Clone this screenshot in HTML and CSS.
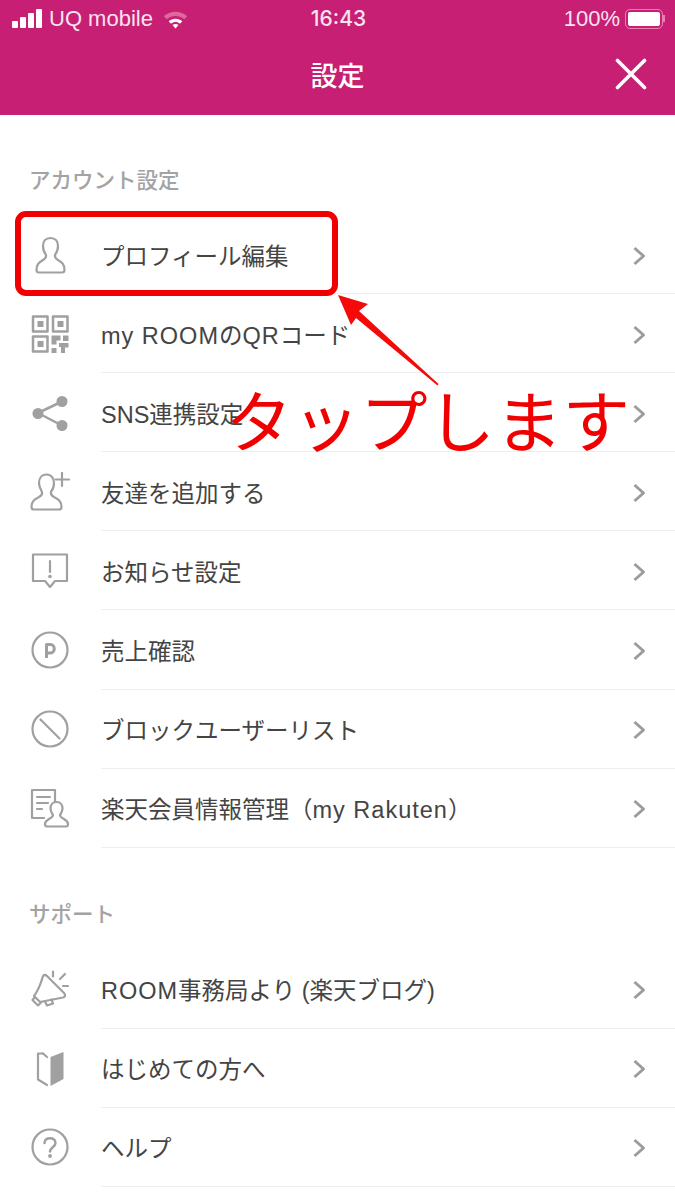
FILE: index.html
```html
<!DOCTYPE html>
<html lang="ja">
<head>
<meta charset="UTF-8" />
<meta name="viewport" content="width=device-width, initial-scale=1" />
<title>設定</title>
<link rel="stylesheet" href="styles.css">
</head>
<body>

  <header class="header">
    <div class="status">
      <div class="status-left">
        <span class="signal"><i></i><i></i><i></i><i></i></span>
        <span>UQ mobile</span>
        <svg class="wifi" viewBox="0 0 24 18" width="27" height="20">
          <path d="M1.500 6.500C7.500 1 16.500 1 22.500 6.500L19.800 9.300C15.300 5.300 8.700 5.300 4.200 9.300Z" fill="#e2669f"/>
          <path d="M5.800 11C9.300 7.900 14.700 7.900 18.200 11L16 13.200C13.700 11.300 10.300 11.300 8 13.200Z" fill="#fff"/>
          <path d="M9.300 14.500C10.900 13.300 13.100 13.300 14.700 14.500L12 17.500Z" fill="#fff"/>
        </svg>
      </div>
      <div class="status-time">16:43</div>
      <div class="status-right">
        <span>100%</span>
        <span class="battery"><span class="battery-fill"></span></span>
        <span class="battery-cap"></span>
      </div>
    </div>
    <div class="nav">
      <h1 class="nav-title">設定</h1>
      <button class="nav-close" aria-label="閉じる">
        <svg viewBox="0 0 32 32" width="32" height="32">
          <path d="M2.500 2.500L29.500 29.500M29.500 2.500L2.500 29.500" stroke="#fff" stroke-width="3.600" stroke-linecap="round" fill="none"/>
        </svg>
      </button>
    </div>
  </header>

  <main class="settings">
    <h2 class="section-title">アカウント設定</h2>
    <ul class="menu">
      <li class="menu-item">
        <svg class="icon" viewBox="0 0 40 40"><path d="M20.500 3C15.500 3 13 6.500 13 11C13 15 14.500 18 16 20C16.500 22.500 15.500 23.500 13 25C9.500 27 6.500 29 6.500 35C6.500 36.500 7.500 37.500 9 37.500H32C33.500 37.500 34.500 36.500 34.500 35C34.500 29 31.500 27 28 25C25.500 23.500 24.500 22.500 25 20C26.500 18 28 15 28 11C28 6.500 25.500 3 20.500 3Z"/></svg>
        <span class="menu-label">プロフィール編集</span>
        <svg class="chevron" viewBox="0 0 14 20"><path d="M2.500 2L11.500 10L2.500 18"/></svg>
      </li>
      <li class="menu-item">
        <svg class="icon" viewBox="0 0 40 40">
          <path d="M3 2.500h14.500v15H3zM23 2.500h14.500v15H23zM3 22.500h14.500v15H3z" stroke-width="2.500"/>
          <path class="solid" d="M7.500 7h6v6h-6zM27.500 7h6v6h-6zM7.500 27h6v6h-6zM21.500 21.500h9v5h-4v4h-5zM33 21.500h5.500v5.500H33zM29 29h9.500v4.500H35V39h-4v-6h-2zM21.500 34h5v5h-5z"/>
        </svg>
        <span class="menu-label"><span class="latin">my ROOM</span>の<span class="latin">QR</span>コード</span>
        <svg class="chevron" viewBox="0 0 14 20"><path d="M2.500 2L11.500 10L2.500 18"/></svg>
      </li>
      <li class="menu-item">
        <svg class="icon" viewBox="0 0 40 40">
          <path d="M32 8.500L8 20L32 32.500" stroke-width="2.500"/>
          <circle class="solid" cx="32" cy="8.500" r="5.500"/>
          <circle class="solid" cx="8" cy="20.500" r="5.500"/>
          <circle class="solid" cx="32" cy="32.500" r="5.500"/>
        </svg>
        <span class="menu-label">SNS連携設定</span>
        <svg class="chevron" viewBox="0 0 14 20"><path d="M2.500 2L11.500 10L2.500 18"/></svg>
      </li>
      <li class="menu-item">
        <svg class="icon" viewBox="0 0 40 40">
          <path d="M16.500 2.500C11.500 2.500 9 6.500 9 11C9 15 11 18 12 20C12.500 22 11.500 23.500 9 25C5 27 1.500 29 1.500 35C1.500 36.500 2.500 37.500 4 37.500H29C30.500 37.500 31.500 36.500 31.500 35C31.500 29 28 27 24 25C21.500 23.500 20.500 22 21 20C22.500 18 24 15 24 11C24 6.500 21.500 2.500 16.500 2.500Z"/>
          <path d="M32 1V14M25.500 7.500H39"/>
        </svg>
        <span class="menu-label">友達を追加する</span>
        <svg class="chevron" viewBox="0 0 14 20"><path d="M2.500 2L11.500 10L2.500 18"/></svg>
      </li>
      <li class="menu-item">
        <svg class="icon" viewBox="0 0 40 40">
          <path d="M3 3.500H37V30H25L20 36L15 30H3Z"/>
          <path d="M20 10V21"/>
          <circle class="solid" cx="20" cy="25.500" r="1.800"/>
        </svg>
        <span class="menu-label">お知らせ設定</span>
        <svg class="chevron" viewBox="0 0 14 20"><path d="M2.500 2L11.500 10L2.500 18"/></svg>
      </li>
      <li class="menu-item">
        <svg class="icon" viewBox="0 0 40 40">
          <circle cx="20" cy="20" r="17.500"/>
          <path d="M16.500 28V14.500H20.500C25.500 14.500 25.500 23 20.500 23H16.500" stroke-width="3" stroke-linecap="butt"/>
        </svg>
        <span class="menu-label">売上確認</span>
        <svg class="chevron" viewBox="0 0 14 20"><path d="M2.500 2L11.500 10L2.500 18"/></svg>
      </li>
      <li class="menu-item">
        <svg class="icon" viewBox="0 0 40 40">
          <circle cx="20" cy="20" r="17.500"/>
          <path d="M10.500 10.500L29.500 29.500"/>
        </svg>
        <span class="menu-label">ブロックユーザーリスト</span>
        <svg class="chevron" viewBox="0 0 14 20"><path d="M2.500 2L11.500 10L2.500 18"/></svg>
      </li>
      <li class="menu-item">
        <svg class="icon" viewBox="0 0 40 40">
          <path d="M14 30H2V2H25V13"/>
          <path d="M7 9H20M7 15H18M7 21H12"/>
          <path d="M26.500 14C22.500 14 20.500 17 20.500 20.500C20.500 23.500 22 25 23 27C23 29 21 30 19 31C16.500 32.500 15 34 15 36C15 37.500 16 38.500 17 38.500H36C37 38.500 38 37.500 38 36C38 34 36.500 32.500 34 31C32 30 30 29 30 27C31 25 32.500 23.500 32.500 20.500C32.500 17 30.500 14 26.500 14Z"/>
        </svg>
        <span class="menu-label">楽天会員情報管理（<span class="latin">my Rakuten</span>）</span>
        <svg class="chevron" viewBox="0 0 14 20"><path d="M2.500 2L11.500 10L2.500 18"/></svg>
      </li>
    </ul>

    <h2 class="section-title section-title-support">サポート</h2>
    <ul class="menu">
      <li class="menu-item">
        <svg class="icon" viewBox="0 0 40 40">
          <path d="M13 7C15 5 16 6 17 7L34 24C36 26 35 28 33 28.500L10 33L4 27C8 22 11 14 13 7Z"/>
          <path d="M5 28L2.500 31L8 36.500L11 33.500M15 32.500L17 36.500L23 34.500L21.500 30.500"/>
          <path d="M23 2.500V7.500M35 5L30 10M38 17H33"/>
        </svg>
        <span class="menu-label"><span class="latin">ROOM</span>事務局より (楽天ブログ)</span>
        <svg class="chevron" viewBox="0 0 14 20"><path d="M2.500 2L11.500 10L2.500 18"/></svg>
      </li>
      <li class="menu-item">
        <svg class="icon" viewBox="0 0 40 40">
          <path d="M13 5.500H8V31.500L17 37"/>
          <path d="M13 5.500L17 9"/>
          <path class="solid" d="M20.500 9L33.500 4V31L20.500 38Z"/>
        </svg>
        <span class="menu-label">はじめての方へ</span>
        <svg class="chevron" viewBox="0 0 14 20"><path d="M2.500 2L11.500 10L2.500 18"/></svg>
      </li>
      <li class="menu-item">
        <svg class="icon" viewBox="0 0 40 40">
          <circle cx="20" cy="20" r="17.500"/>
          <path d="M14.500 16C14.500 9.500 25.500 9.500 25.500 16C25.500 20 20 20.500 20 24.500" stroke-width="2.500"/>
          <circle class="solid" cx="20" cy="29" r="1.900"/>
        </svg>
        <span class="menu-label">ヘルプ</span>
        <svg class="chevron" viewBox="0 0 14 20"><path d="M2.500 2L11.500 10L2.500 18"/></svg>
      </li>
    </ul>
  </main>

  <!-- annotation drawn over the screenshot -->
  <div class="note-box"></div>
  <svg class="note-arrow" viewBox="0 0 110 100" width="110" height="100">
    <path d="M0 1L30 10L21 17L100.500 90L99.500 91.500L18 24L13 31Z" fill="#f50a0a"/>
  </svg>
  <div class="note-text">タップします</div>

</body>
</html>
```

FILE: styles.css
```css
* {
  box-sizing: border-box;
}

html, body {
  height: 1200px;
  overflow: hidden;
}

body {
  margin: 0;
  position: relative;
  background: #fff;
  font-family: 'Liberation Sans', 'Noto Sans CJK JP', sans-serif;
  color: #444;
}

ul {
  list-style: none;
  margin: 0;
  padding: 0;
}

/* Header */
.header {
  background: #c71f74;
  color: #fff;
  height: 115px;
}

.status {
  height: 37px;
  padding: 0 10px 0 12px;
  display: flex;
  align-items: center;
  justify-content: space-between;
  font-size: 22px;
  color: #f8e3ee;
}

.status-left,
.status-right {
  display: flex;
  align-items: center;
  width: 210px;
}

.status-left {
  gap: 7px;
}

.status-right {
  justify-content: flex-end;
  gap: 5px;
}

.signal {
  display: flex;
  align-items: flex-end;
  gap: 2px;
  height: 19px;
}

.signal i {
  width: 6px;
  background: #fff;
  border-radius: 1px;
}

.signal i:nth-child(1) { height: 7px; }
.signal i:nth-child(2) { height: 11px; }
.signal i:nth-child(3) { height: 15px; }
.signal i:nth-child(4) { height: 19px; }

.wifi {
  margin-left: 2px;
}

.status-time {
  font-family: 'Inter', 'Liberation Sans', sans-serif;
  font-weight: 500;
  font-size: 21px;
}

.battery {
  width: 38px;
  height: 20px;
  padding: 2px;
  border: 1.500px solid #ec7fb2;
  border-radius: 5px;
  display: block;
}

.battery-fill {
  display: block;
  height: 100%;
  background: #fff;
  border-radius: 2px;
}

.battery-cap {
  width: 2px;
  height: 7px;
  margin-left: -5px;
  background: #ec7fb2;
}

.nav {
  position: relative;
  height: 78px;
  display: flex;
  align-items: center;
  justify-content: center;
  padding-bottom: 3px;
}

.nav-title {
  margin: 0;
  font-size: 27px;
  font-weight: 500;
  font-family: 'Noto Sans CJK JP', sans-serif;
}

.nav-close {
  position: absolute;
  right: 28px;
  top: 21px;
  width: 32px;
  height: 32px;
  padding: 0;
  border: none;
  background: none;
}

/* Settings list */
.settings {
  padding-top: 46px;
}

.section-title {
  margin: 0 0 19px 29px;
  height: 35px;
  line-height: 35px;
  font-size: 21.500px;
  font-weight: 500;
  color: #a3a3a3;
  font-family: 'Noto Sans CJK JP', sans-serif;
}

.section-title-support {
  margin-top: 47px;
  margin-bottom: 20px;
}

.menu-item {
  height: 79.100px;
  display: flex;
  align-items: center;
  padding-left: 30px;
  position: relative;
}

.menu-item::after {
  content: "";
  position: absolute;
  left: 101px;
  right: 0;
  bottom: 0;
  height: 1px;
  background: #efefef;
}

.icon {
  width: 40px;
  height: 40px;
  flex: none;
  fill: none;
  stroke: #a0a0a0;
  stroke-width: 2.200;
  stroke-linejoin: round;
  stroke-linecap: round;
}

.icon .solid {
  fill: #a0a0a0;
  stroke: none;
}

.menu-label {
  margin-left: 31px;
  flex: 1;
  font-size: 23.500px;
  white-space: nowrap;
}

.latin {
  letter-spacing: 1px;
}

.chevron {
  width: 14px;
  height: 20px;
  margin: 2px 29px 0 0;
  fill: none;
  stroke: #9c9c9c;
  stroke-width: 3;
  stroke-linejoin: round;
}

/* Red annotation */
.note-box {
  position: absolute;
  left: 15px;
  top: 211px;
  width: 323px;
  height: 85px;
  border: 6px solid #f00000;
  border-radius: 11px;
}

.note-arrow {
  position: absolute;
  left: 338px;
  top: 294px;
}

.note-text {
  position: absolute;
  left: 225px;
  top: 370px;
  font-size: 67.500px;
  line-height: 96px;
  color: #f00000;
  white-space: nowrap;
  font-family: 'Noto Sans CJK JP', sans-serif;
}
```
